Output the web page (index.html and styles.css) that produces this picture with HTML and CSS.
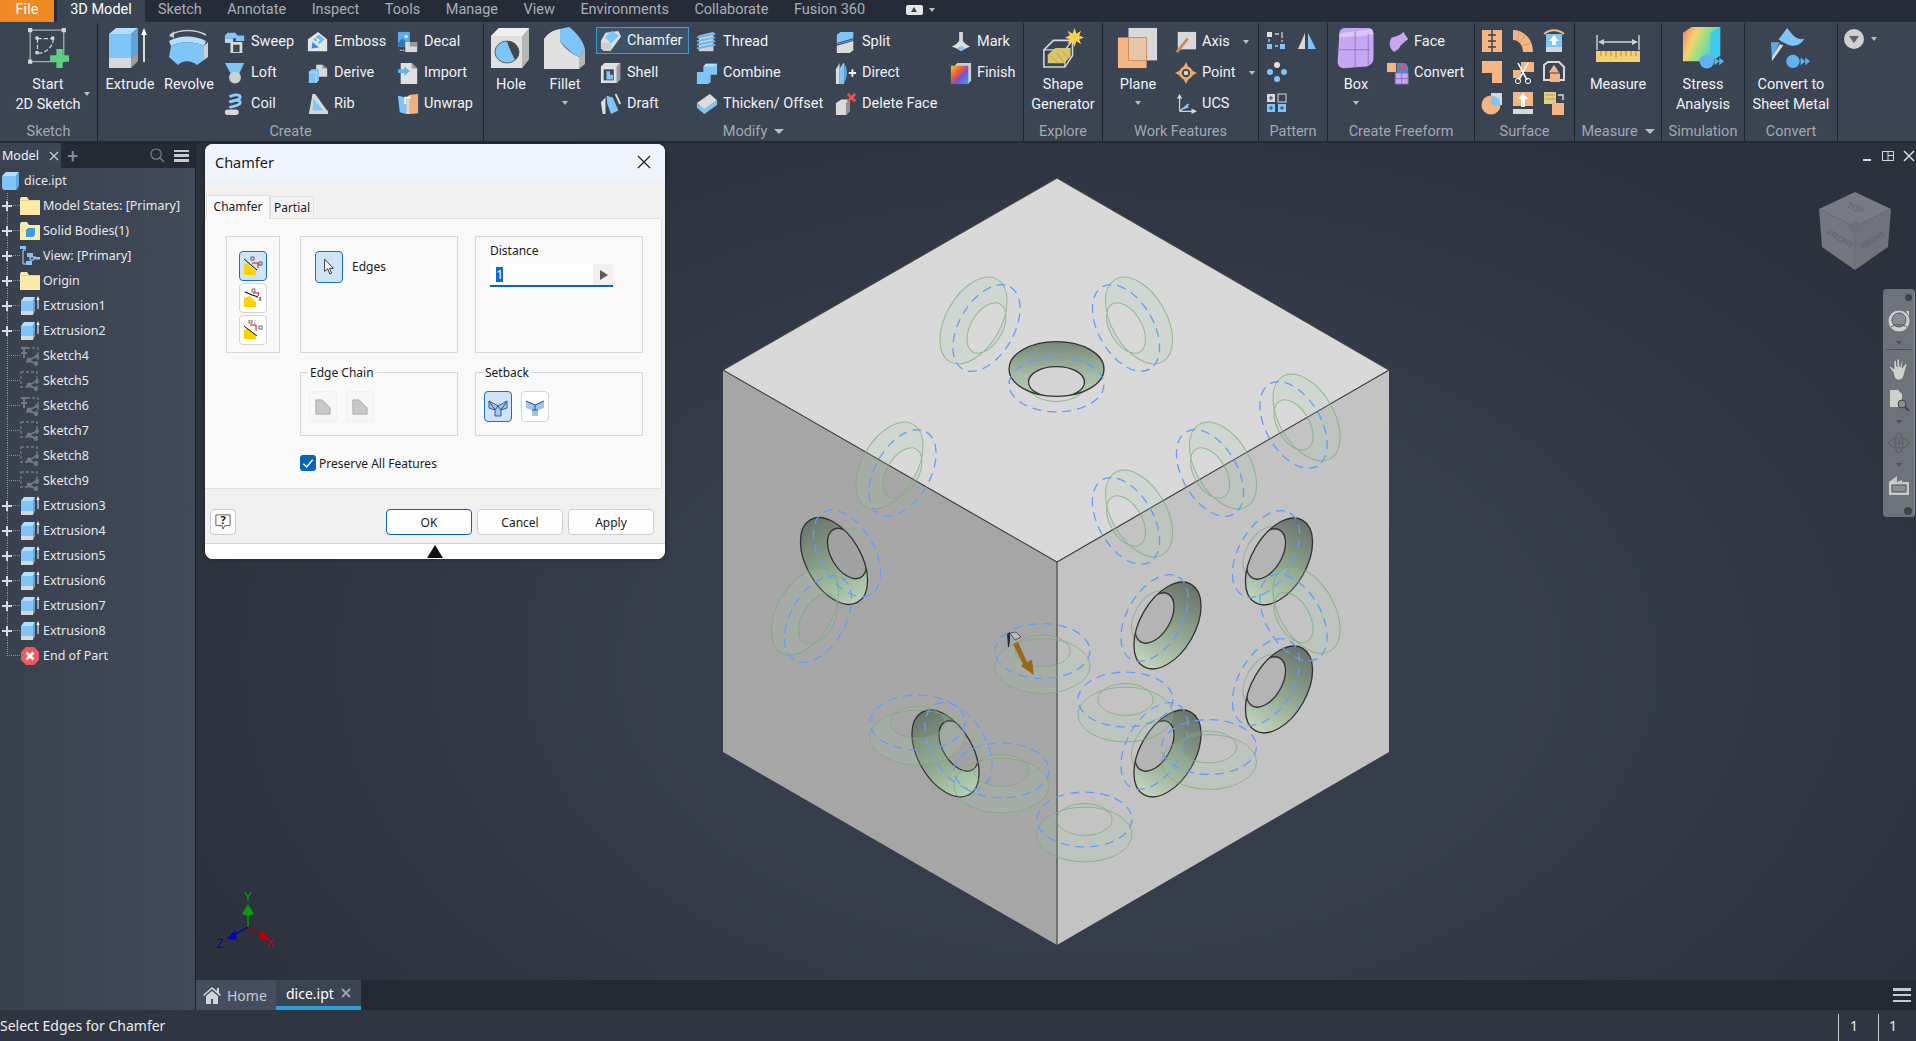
FILE: index.html
```html
<!DOCTYPE html>
<html lang="en">
<head>
<meta charset="utf-8">
<title>dice.ipt - Chamfer</title>
<link rel="stylesheet" href="styles.css">
</head>
<body>
<svg class="defs" width="0" height="0">
<defs>
<linearGradient id="gStress" x1="0" y1="0" x2="1" y2="0.4"><stop offset="0" stop-color="#f77a6a"/><stop offset=".35" stop-color="#f4d36c"/><stop offset=".65" stop-color="#8fe08a"/><stop offset="1" stop-color="#3fc9ee"/></linearGradient>
<linearGradient id="gFinish" x1="0" y1="0" x2="1" y2="1"><stop offset="0" stop-color="#f3c12d"/><stop offset=".4" stop-color="#e8593c"/><stop offset=".6" stop-color="#7c4fd8"/><stop offset="1" stop-color="#2fa8e8"/></linearGradient>
<symbol id="start2d" viewBox="0 0 40 40"><path d="M3 3H35V33H3Z" fill="none" stroke="#a8adb5" stroke-width="1.2"/><g fill="#d8d8d8"><rect x="1" y="1" width="4" height="4"/><rect x="33" y="1" width="4" height="4"/><rect x="1" y="31" width="4" height="4"/></g><path d="M10 11H25M10 11V25M25 11C25 18 19 25 10 25" fill="none" stroke="#cfd2d6" stroke-width="1.2" stroke-dasharray="4 2"/><rect x="8" y="9" width="3" height="3" fill="#ddd"/><rect x="23" y="9" width="3" height="3" fill="#ddd"/><rect x="8" y="23" width="3" height="3" fill="#ddd"/><path d="M27 24h6v6h6v6h-6v6h-6v-6h-6v-6h6z" fill="#5ad17e" transform="translate(1 -3)"/></symbol>
<symbol id="extrude" viewBox="0 0 44 42"><path d="M1 7 8 1H30L23 7Z" fill="#b3e0ff"/><path d="M1 7H23V31H1Z" fill="#7fc5fa"/><path d="M23 7 30 1V25L23 31Z" fill="#5da6dd"/><path d="M1 31H23V41H1Z" fill="#d9d9d9"/><path d="M23 31 30 25V34L23 41Z" fill="#9c9c9c"/><path d="M36 35V4" stroke="#fff" stroke-width="1.6"/><path d="M33 8 36 1 39 8Z" fill="#fff"/></symbol>
<symbol id="revolve" viewBox="0 0 44 42"><path d="M3 8C14 2 28 2 39 8" fill="none" stroke="#c9ccd0" stroke-width="1.6"/><path d="M2 9 7 4V11Z" fill="#c9ccd0"/><path d="M2 14C12 8 28 8 39 14L37 19C27 14 13 14 4 19Z" fill="#b3e0ff"/><path d="M4 19C13 14 27 14 37 19V33L30 38C24 33 16 33 11 38L2 30Z" fill="#7fc5fa"/><path d="M37 19 41 15V30L30 38 37 33Z" fill="#d0d0d0"/></symbol>
<symbol id="sweep" viewBox="0 0 24 24"><path d="M1 5 4 2H12L15 5H22V11H13V8H1Z" fill="#7fc5fa"/><path d="M1 8H10V13H1Z" fill="#a9dcff"/><path d="M7 12H20V24H7Z" fill="#d9d9d9"/><path d="M10 15H17V23H10Z" fill="#43484f"/></symbol>
<symbol id="emboss" viewBox="0 0 24 24"><path d="M1 9 12 1 22 9V22H1Z" fill="#e4e4e4"/><path d="M7 9 13 4 19 9 13 15Z" fill="#6cb8f2"/><path d="M6 12 13 18 5 19Z" fill="#3a90d8"/><path d="M10 8l3 2-3 2 3 2" stroke="#fff" stroke-width="1.2" fill="none"/></symbol>
<symbol id="decal" viewBox="0 0 24 24"><rect x="1" y="1" width="13" height="16" fill="#5aa9e8"/><path d="M1 13 6 8 14 15V17H1Z" fill="#2f78b8"/><circle cx="10" cy="6" r="2" fill="#cfe8fb"/><path d="M9 12H22V23H9Z" fill="#d9d9d9"/><path d="M14 12H22V17H14Z" fill="#9a9a9a"/><path d="M3 21H8" stroke="#ddd" stroke-width="1.2" stroke-dasharray="2 1"/></symbol>
<symbol id="loft" viewBox="0 0 24 24"><path d="M1 1H22L16 14H8Z" fill="#7fc5fa"/><circle cx="12" cy="17" r="6.5" fill="#cfcfcf"/></symbol>
<symbol id="derive" viewBox="0 0 24 24"><path d="M10 3H17L22 7V16H10Z" fill="#d9d9d9"/><path d="M17 3V7H22Z" fill="#8f8f8f"/><path d="M2 11 5 8H13V20L10 23H2Z" fill="#7fc5fa"/><path d="M2 11H10V23" fill="none" stroke="#b3e0ff"/></symbol>
<symbol id="import" viewBox="0 0 24 24"><path d="M4 1H16L22 7V24H4Z" fill="#e0e0e0"/><path d="M16 1V7H22Z" fill="#9a9a9a"/><path d="M1 8H8V5L14 10 8 15V12H1Z" fill="#5fb3f2"/></symbol>
<symbol id="coil" viewBox="0 0 24 24"><g fill="none" stroke="#8fcdfa" stroke-width="3"><path d="M6 4C14 0 20 3 17 6 14 9 8 8 6 10"/><path d="M6 10C14 6 20 9 17 12 14 15 8 14 6 16"/></g><g fill="#d9d9d9"><circle cx="4" cy="21" r="3"/><rect x="4" y="18" width="12" height="6" rx="3"/></g></symbol>
<symbol id="rib" viewBox="0 0 24 24"><path d="M6 1H9L21 18 23 20V23H2Z" fill="#d9d9d9"/><path d="M7 6 18 19H6Z" fill="#7fc5fa"/></symbol>
<symbol id="unwrap" viewBox="0 0 24 24"><path d="M1 3 10 5V23L3 21Z" fill="#7fc5fa"/><path d="M14 2 23 1V22L14 23Z" fill="#f1b07e"/><path d="M10 5 14 2V23L10 23Z" fill="#d9d9d9"/><path d="M9 12V5H15" fill="none" stroke="#fff" stroke-width="2"/></symbol>
<symbol id="hole" viewBox="0 0 44 42"><path d="M2 9 10 1H40V32L33 41H2Z" fill="#e0e0e0"/><path d="M33 9 40 1V32L33 41Z" fill="#b5b5b5"/><path d="M2 9 10 1H40L33 9Z" fill="#f0f0f0"/><ellipse cx="18" cy="25" rx="12" ry="11" fill="#7fc5fa" stroke="#5a5f66"/><path d="M18 14A12 11 0 0 1 26 33C24 28 20 22 18 14Z" fill="#43484f"/></symbol>
<symbol id="fillet" viewBox="0 0 44 42"><path d="M1 12C5 6 10 3 17 2V14C22 22 28 26 36 30V42H1Z" fill="#e0e0e0"/><path d="M17 2 26 0C34 6 40 14 42 22L36 30C28 26 22 20 17 14Z" fill="#7fc5fa"/><path d="M36 30 42 22V37L36 42Z" fill="#b5b5b5"/></symbol>
<symbol id="chamfer" viewBox="0 0 24 24"><path d="M1 12 6 3 20 1 23 7 12 22 1 20Z" fill="#e0e0e0"/><path d="M5 8 13 1 21 6 12 15Z" fill="#7fc5fa"/><path d="M1 13 12 15V23H4L1 20Z" fill="#d0d0d0"/></symbol>
<symbol id="shell" viewBox="0 0 24 24"><path d="M1 5 5 1H22V19L18 23H1Z" fill="#e0e0e0"/><path d="M18 5 22 1V19L18 23Z" fill="#999"/><path d="M4 8H15V20H4Z" fill="#43484f"/><path d="M7 14H14V19H7V14M7 10H11V14H7Z" fill="#7fc5fa"/></symbol>
<symbol id="draft" viewBox="0 0 24 24"><path d="M1 10 6 5V23H3Z" fill="#e0e0e0"/><path d="M7 3 14 5 20 19 12 23 8 12Z" fill="#7fc5fa"/><path d="M17 1 22 12" stroke="#e0e0e0" stroke-width="2"/></symbol>
<symbol id="thread" viewBox="0 0 24 24"><path d="M3 5 19 1V22H3Z" fill="#cfcfcf"/><g fill="none" stroke="#5fb3f2" stroke-width="2"><path d="M1 7 21 3M1 11 21 7M1 15 21 11M1 19 21 15"/></g></symbol>
<symbol id="combine" viewBox="0 0 24 24"><path d="M11 2H23V14H16V22L13 24H1V11H8V5Z" fill="#7fc5fa"/><path d="M8 5 11 2H23L20 5Z" fill="#b3e0ff"/></symbol>
<symbol id="thicken" viewBox="0 0 24 24"><path d="M1 11 15 1 23 8 9 18Z" fill="#dcdcdc"/><path d="M1 11 9 18 23 8V13L9 23 1 16Z" fill="#7fc5fa"/></symbol>
<symbol id="split" viewBox="0 0 24 24"><path d="M2 4 6 1H20V8L2 13Z" fill="#7fc5fa"/><path d="M2 14 20 9V10L2 15Z" fill="#5fa8e0"/><path d="M2 16 20 11V21L16 24H2Z" fill="#dcdcdc"/></symbol>
<symbol id="direct" viewBox="0 0 24 24"><path d="M1 24V8L5 1V24Z" fill="#dcdcdc"/><path d="M5 24V7L9 1H10V24Z" fill="#7fc5fa"/><path d="M15 11h3V8h2v3h3v2h-3v3h-2v-3h-3z" fill="#fff"/><path d="M10 2C14 6 14 18 10 22" fill="#5fa8e0"/></symbol>
<symbol id="delface" viewBox="0 0 24 24"><path d="M1 11 7 7H16V20L12 24H1Z" fill="#d9d9d9"/><path d="M12 11 16 7V20L12 24Z" fill="#8f8f8f"/><path d="M14 1 22 9M22 1 14 9" stroke="#e8524f" stroke-width="3"/></symbol>
<symbol id="mark" viewBox="0 0 24 24"><path d="M10 1H14V11L19 16H5L10 11Z" fill="#d9d9d9"/><path d="M2 17 12 12 22 17 12 21Z" fill="#e0e0e0"/><path d="M7 19 12 16 18 19 12 22Z" fill="#7fc5fa"/></symbol>
<symbol id="finish" viewBox="0 0 24 24"><path d="M5 4 8 1H23V20L20 24Z" fill="#cfcfcf"/><rect x="1" y="4" width="19" height="20" fill="url(#gFinish)"/></symbol>
<symbol id="shape" viewBox="0 0 44 44"><path d="M2 24 12 14H32V30L24 42H2Z" fill="none" stroke="#d9d9d9" stroke-width="1.6"/><path d="M2 24H24V42M24 24 32 14" fill="none" stroke="#d9d9d9" stroke-width="1.4"/><path d="M6 29 14 22H30V31L23 38H6Z" fill="#d9c56a"/><path d="M9 30 17 38M15 27 23 37M22 26 28 33" stroke="#b39f4c"/><path d="M34 1 36 7 41 4 39 9 44 11 39 13 41 18 36 15 34 21 32 15 27 18 29 13 24 11 29 9 27 4 32 7Z" fill="#f5d04a"/></symbol>
<symbol id="plane" viewBox="0 0 44 44"><rect x="12" y="1" width="30" height="34" fill="#d9d9d9"/><rect x="1" y="11" width="30" height="32" fill="#f4b583"/><rect x="12" y="11" width="19" height="24" fill="#e9c5a8" stroke="#c78e5f"/></symbol>
<symbol id="axis" viewBox="0 0 24 24"><rect x="3" y="1" width="20" height="19" fill="#d9d9d9"/><path d="M2 23 14 8" stroke="#c98a60" stroke-width="3"/></symbol>
<symbol id="point" viewBox="0 0 24 24"><circle cx="12" cy="12" r="6" fill="none" stroke="#f0a867" stroke-width="3"/><circle cx="12" cy="12" r="2.5" fill="#d9d9d9"/><path d="M12 0 15 6H9ZM12 24 9 18H15ZM0 12 6 9V15ZM24 12 18 15V9Z" fill="#f0a867"/></symbol>
<symbol id="ucs" viewBox="0 0 24 24"><path d="M5 20V4M5 20H22M5 20 15 12" fill="none" stroke="#d0d0d0" stroke-width="1.4"/><path d="M2 6 5 1 8 6ZM18 17 24 20 18 23Z" fill="#d9d9d9"/><path d="M8 18 13 12 15 16Z" fill="#7fc5fa"/></symbol>
<symbol id="prect" viewBox="0 0 20 20"><g fill="#e0e0e0"><rect x="0" y="1" width="5" height="5"/></g><g fill="#7fc5fa"><rect x="0" y="13" width="5" height="5"/><rect x="13" y="13" width="5" height="5"/></g><path d="M8 3H12M15 1V7M2 8V11M8 15H11M15 9V11" stroke="#d0d0d0" stroke-width="1.3" fill="none"/></symbol>
<symbol id="pmirror" viewBox="0 0 20 20"><path d="M8 2V18H1Z" fill="#d9d9d9"/><path d="M11 2V18H19Z" fill="#7fc5fa"/></symbol>
<symbol id="pcirc" viewBox="0 0 20 20"><circle cx="10" cy="3" r="3" fill="#e0e0e0"/><g fill="#7fc5fa"><circle cx="17" cy="10" r="3"/><circle cx="10" cy="17" r="3"/><circle cx="3" cy="10" r="3"/></g></symbol>
<symbol id="psk" viewBox="0 0 20 20"><rect x="0" y="1" width="8" height="8" fill="#d9d9d9"/><rect x="0" y="11" width="8" height="8" fill="#7fc5fa"/><rect x="11" y="1" width="8" height="8" fill="none" stroke="#d9d9d9"/><rect x="11" y="11" width="8" height="8" fill="#7fc5fa"/><path d="M2 5H6M4 3V7M2 15H6M4 13V17M13 15H17M15 13V17" stroke="#3b4453"/></symbol>
<symbol id="box" viewBox="0 0 44 48"><path d="M3 8C3 3 6 1 10 1H34C39 1 42 3 42 8V36C42 41 38 44 34 45L8 47C4 47 1 44 1 40Z" fill="#c9a6f2"/><path d="M3 8C8 5 30 5 40 2L42 8C34 11 10 11 3 12Z" fill="#dcc4f7"/><path d="M21 5V46M1 26H38M36 8V44" stroke="#8f6fc0" fill="none"/></symbol>
<symbol id="face" viewBox="0 0 24 24"><path d="M5 7C10 6 15 4 18 1L23 9C19 12 15 15 13 19L8 23C3 19 1 14 5 7Z" fill="#c9a6f2"/></symbol>
<symbol id="convff" viewBox="0 0 24 24"><rect x="0" y="1" width="10" height="10" fill="#f4b583"/><path d="M11 1H20C24 5 24 9 22 12H11Z" fill="#3a8fd8"/><path d="M14 3H20V8H14Z" fill="#e8524f"/><rect x="9" y="12" width="14" height="12" fill="#c9a6f2" stroke="#8f6fc0"/><path d="M16 12V24M9 18H23" stroke="#8f6fc0"/></symbol>
<symbol id="s1" viewBox="0 0 22 24"><rect x="1" y="1" width="20" height="22" fill="#f4b583"/><path d="M11 1V23M7 6H15M7 12H15M7 18H15" stroke="#3b4453" stroke-width="1.5"/></symbol>
<symbol id="s2" viewBox="0 0 22 24"><path d="M1 1C12 1 21 10 21 23H11C11 17 7 11 1 11Z" fill="#f4b583"/><path d="M7 2 5 12M13 6 8 14M18 14 10 17" stroke="#d99a68"/></symbol>
<symbol id="s3" viewBox="0 0 22 24"><path d="M1 5C7 0 15 0 21 5" fill="none" stroke="#f4b583" stroke-width="2"/><rect x="3" y="5" width="16" height="13" fill="#7fc5fa"/><path d="M11 6 16 12H13V16H9V12H6Z" fill="#fff"/><rect x="3" y="18" width="16" height="5" fill="#d9d9d9"/></symbol>
<symbol id="s4" viewBox="0 0 22 24"><path d="M1 1H21V23H11V13H1Z" fill="#f4b583"/></symbol>
<symbol id="s5" viewBox="0 0 22 24"><rect x="9" y="2" width="13" height="10" fill="#f4b583"/><rect x="1" y="10" width="8" height="8" fill="#f4b583"/><path d="M6 3 15 20M16 3 7 20" stroke="#fff" stroke-width="1.6"/><circle cx="6" cy="21" r="2.6" fill="none" stroke="#fff"/><circle cx="16" cy="21" r="2.6" fill="none" stroke="#fff"/></symbol>
<symbol id="s6" viewBox="0 0 22 24"><path d="M1 5 5 2H16L21 7V20H1Z" fill="none" stroke="#d9d9d9" stroke-width="2"/><rect x="7" y="13" width="10" height="9" fill="#f4b583"/><path d="M11 4 17 13H5Z" fill="#f4b583" stroke="#3b4453"/></symbol>
<symbol id="s7" viewBox="0 0 22 24"><circle cx="10" cy="14" r="9.5" fill="#f4b583"/><path d="M10 14V2H21V14Z" fill="#d9d9d9"/><path d="M10 14V4.5A9.5 9.5 0 0 1 19.5 14Z" fill="#7fc5fa"/></symbol>
<symbol id="s8" viewBox="0 0 22 24"><rect x="1" y="1" width="20" height="14" fill="#f4b583"/><path d="M11 2 16 8H13V16H9V8H6Z" fill="#fff"/><rect x="1" y="18" width="20" height="5" fill="#d9d9d9"/></symbol>
<symbol id="s9" viewBox="0 0 22 24"><rect x="1" y="1" width="12" height="12" fill="#e3cf7f"/><path d="M2 4H12M2 8H12" stroke="#b39f4c"/><rect x="9" y="12" width="12" height="12" fill="#f4b583"/><path d="M15 4H20V9" fill="none" stroke="#ddd" stroke-width="1.4"/></symbol>
<symbol id="measure" viewBox="0 0 44 30"><path d="M1 2V17M43 2V17" stroke="#d0d0d0" stroke-width="1.4"/><path d="M4 9H40" stroke="#d0d0d0" stroke-width="1.4"/><path d="M2 9 8 6V12ZM42 9 36 6V12Z" fill="#d0d0d0"/><rect x="0" y="18" width="44" height="11" fill="#f5d070"/><path d="M5 18V23M10 18V23M15 18V23M20 18V25M25 18V23M30 18V23M35 18V23M40 18V23" stroke="#a88b3a"/></symbol>
<symbol id="stress" viewBox="0 0 44 44"><path d="M1 6 10 0H40V30L30 36H1Z" fill="url(#gStress)"/><path d="M30 6 40 0V30L30 36Z" fill="#3fc9ee"/><circle cx="26" cy="36" r="7.5" fill="#5fb3f2"/><path d="M34 32 39 36 34 40ZM39 32 44 36 39 40Z" fill="#5fb3f2"/></symbol>
<symbol id="convert" viewBox="0 0 44 44"><path d="M9 13 18 1 22 6C26 12 32 14 36 12 32 20 24 21 18 18 14 16 12 15 9 13Z" fill="#7fc5fa"/><path d="M1 16H10L2 34Z" fill="#5fa8e0"/><path d="M10 18 14 19 2 36V32Z" fill="#d9d9d9"/><circle cx="24" cy="36" r="7" fill="#5fb3f2"/><path d="M32 32 37 36 32 40ZM37 32 42 36 37 40Z" fill="#5fb3f2"/></symbol>
<symbol id="part" viewBox="0 0 20 20"><path d="M1 5 5 1H18L15 5Z" fill="#b3e0ff"/><path d="M1 5H15V19H4C2 19 1 18 1 16Z" fill="#7fc5fa"/><path d="M15 5 18 1V14C18 16 16 19 15 19Z" fill="#5fa8e0"/></symbol>
<symbol id="folder" viewBox="0 0 20 20"><path d="M0 3 1 1H7L9 4H20V19H0Z" fill="#fde9a8"/><path d="M0 4H20V5H0Z" fill="#e7d08a"/></symbol>
<symbol id="solid" viewBox="0 0 20 20"><path d="M0 3 1 1H7L9 4H20V19H0Z" fill="#fde9a8"/><path d="M6 9 8 7H15V14L13 16H6Z" fill="#3f9be0"/></symbol>
<symbol id="viewi" viewBox="0 0 20 20"><path d="M3 4V18H6M3 4H6M10 8V14H14M10 11H16" fill="none" stroke="#cfd2d6" stroke-width="1"/><rect x="0" y="0" width="6" height="3" fill="#7fc5fa"/><rect x="7" y="7" width="6" height="4" fill="#7fc5fa"/><rect x="13" y="11" width="7" height="2.5" fill="#7fc5fa"/><rect x="6" y="15" width="6" height="4" fill="#7fc5fa"/></symbol>
<symbol id="extr" viewBox="0 0 20 20"><path d="M1 5 4 1H15L13 5Z" fill="#b3e0ff"/><path d="M1 5H13V15H1Z" fill="#7fc5fa"/><path d="M13 5 15 1V11L13 15Z" fill="#5fa8e0"/><path d="M1 15H13V19H1Z" fill="#d9d9d9"/><path d="M13 15 15 11V15L13 19Z" fill="#9c9c9c"/><path d="M18 13V2" stroke="#fff"/><path d="M16.5 4 18 0 19.5 4Z" fill="#fff"/></symbol>
<symbol id="sk" viewBox="0 0 20 20"><path d="M1 1H17V16H1Z" fill="none" stroke="#747a84" stroke-width="1.3" stroke-dasharray="3 2"/><path d="M9 14 17 10M9 14 16 18" stroke="#747a84" stroke-width="1.5"/><circle cx="9" cy="14" r="2.4" fill="#747a84"/><circle cx="17" cy="10" r="2" fill="#747a84"/><circle cx="16" cy="18" r="2" fill="#747a84"/></symbol>
<symbol id="skpin" viewBox="0 0 20 20"><path d="M7 2H18V16H6" fill="none" stroke="#747a84" stroke-width="1.3" stroke-dasharray="3 2"/><path d="M1 2H7M4 2V12M1 7H7" stroke="#747a84" stroke-width="2"/><path d="M9 14 17 10M9 14 16 18" stroke="#747a84" stroke-width="1.5"/><circle cx="9" cy="14" r="2.4" fill="#747a84"/><circle cx="17" cy="10" r="2" fill="#747a84"/><circle cx="16" cy="18" r="2" fill="#747a84"/></symbol>
<symbol id="endp" viewBox="0 0 20 20"><path d="M6 1H14L19 6V14L14 19H6L1 14V6Z" fill="#ee5a5f"/><path d="M6.5 6.5 13.5 13.5M13.5 6.5 6.5 13.5" stroke="#fff" stroke-width="2.6"/></symbol>
<symbol id="plus" viewBox="0 0 12 12"><path d="M1 6H11M6 1V11" stroke="#d8dbe0" stroke-width="2"/></symbol>
<symbol id="chA" viewBox="0 0 20 20"><path d="M1 9 4 7 13 15V19H1Z" fill="#fdd400"/><path d="M1 3 14 14" stroke="#111"/><path d="M9 7H15V12" fill="none" stroke="#e00"/><rect x="8" y="1" width="3" height="3" fill="none" stroke="#333" stroke-width=".7"/><rect x="16" y="6" width="3" height="3" fill="none" stroke="#333" stroke-width=".7"/></symbol>
<symbol id="chB" viewBox="0 0 20 20"><path d="M1 10 7 8 13 14V19H1Z" fill="#fdd400"/><path d="M1 7 14 5" stroke="#111" transform="rotate(30 7 7)"/><path d="M10 5H16L14 10" fill="none" stroke="#e00"/><rect x="9" y="1" width="3" height="3" fill="none" stroke="#333" stroke-width=".7"/><path d="M16 13 17 9 18 13" fill="none" stroke="#333" stroke-width=".7"/></symbol>
<symbol id="chC" viewBox="0 0 20 20"><path d="M1 10 5 8 13 15V19H1Z" fill="#fdd400"/><path d="M1 6 14 16" stroke="#111"/><path d="M7 5H13V11" fill="none" stroke="#e00"/><rect x="6" y="0" width="3" height="3" fill="none" stroke="#333" stroke-width=".7"/><path d="M11 0H12.5M11 3H12.5" stroke="#333" stroke-width=".7"/><rect x="16" y="6" width="3" height="3" fill="none" stroke="#333" stroke-width=".7"/></symbol>
<symbol id="cursor" viewBox="0 0 16 20"><path d="M3 1V15L6.5 12 9 18 11 17 8.5 11.5H13Z" fill="#fff" stroke="#222"/></symbol>
<symbol id="edgeA" viewBox="0 0 18 18"><path d="M1 1H8L17 10V17H1Z" fill="#c8c8c8" stroke="#a5a5a5"/></symbol>
<symbol id="setb" viewBox="0 0 20 20"><path d="M1 4 10 9 19 4V11L13 13V19H7V13L1 11Z" fill="#a6c4e8" stroke="#2c5fa8"/><path d="M7 13 10 9 13 13M1 4 7 13M19 4 13 13" fill="none" stroke="#1f4e9c"/></symbol>
<symbol id="setc" viewBox="0 0 20 20"><path d="M1 4 10 8 19 4V11L13 13V19H7V13L1 11Z" fill="#a6c4e8"/><path d="M1 4 10 8 19 4M10 8V13M7 13H13" fill="none" stroke="#1f4e9c"/></symbol>
<symbol id="help" viewBox="0 0 18 18"><path d="M1 1H17V13H11L9 17 8 13H1Z" fill="none" stroke="#555"/></symbol>
<clipPath id="cpOuter"><ellipse rx="47.5" ry="27.4"/></clipPath>
<clipPath id="cpTop"><ellipse cx="1056.5" cy="369" rx="47.5" ry="27.4"/></clipPath>
<g id="ghostUp"><path d="M-47.5 0A47.5 27.4 0 1 0 47.5 0A47.5 27.4 0 1 0-47.5 0ZM-27.6-15A27.6 15.9 0 1 0 27.6-15A27.6 15.9 0 1 0-27.6-15Z" class="gh"/><ellipse cy="-15" rx="47.5" ry="27.4" class="dash"/></g>
<g id="ghostDown"><path d="M-47.5 0A47.5 27.4 0 1 0 47.5 0A47.5 27.4 0 1 0-47.5 0ZM-27.6 15A27.6 15.9 0 1 0 27.6 15A27.6 15.9 0 1 0-27.6 15Z" class="gh"/><ellipse cy="15" rx="47.5" ry="27.4" class="dash"/></g>
<linearGradient id="ringR" x1="1" y1=".5" x2="0" y2=".5"><stop offset="0" stop-color="#6a726b"/><stop offset=".5" stop-color="#8fa48f"/><stop offset="1" stop-color="#c2d5bf"/></linearGradient>
<linearGradient id="ringL" x1="0" y1=".5" x2="1" y2=".5"><stop offset="0" stop-color="#6a756b"/><stop offset=".5" stop-color="#8aa28a"/><stop offset="1" stop-color="#bad1b6"/></linearGradient>
<linearGradient id="ringT" x1=".5" y1="0" x2=".5" y2="1"><stop offset="0" stop-color="#76877a"/><stop offset=".6" stop-color="#a5bba5"/><stop offset="1" stop-color="#b8cab5"/></linearGradient>
<g id="holeR"><ellipse cy="-19" rx="27.6" ry="15.9" class="gh-line"/><ellipse rx="47.5" ry="27.4" fill="url(#ringR)"/><ellipse cy="-15" rx="27.6" ry="15.9" fill="#b4b4b4" stroke="#333" stroke-width="1.3" clip-path="url(#cpOuter)"/><ellipse rx="47.5" ry="27.4" fill="none" stroke="#333" stroke-width="1.3"/><ellipse cy="-15" rx="47.5" ry="27.4" class="dash"/></g>
<g id="holeL"><ellipse cy="-19" rx="27.6" ry="15.9" class="gh-line"/><ellipse rx="47.5" ry="27.4" fill="url(#ringL)"/><ellipse cy="-15" rx="27.6" ry="15.9" fill="#a2a2a2" stroke="#333" stroke-width="1.3" clip-path="url(#cpOuter)"/><ellipse rx="47.5" ry="27.4" fill="none" stroke="#333" stroke-width="1.3"/><ellipse cy="-15" rx="47.5" ry="27.4" class="dash"/></g>
</defs>
</svg>

<div class="app">
<nav class="menubar">
<span class="mtab file">File</span><span class="mtab cur">3D Model</span>
<span class="mi first">Sketch</span><span class="mi">Annotate</span><span class="mi">Inspect</span><span class="mi">Tools</span><span class="mi">Manage</span><span class="mi">View</span><span class="mi">Environments</span><span class="mi">Collaborate</span><span class="mi">Fusion 360</span>
<span class="mcam"><span class="camb"></span><span class="caret"></span></span>
</nav>

<section class="ribbon">
<div class="rg w-sketch"><div class="rb">
<div class="big c96 rel"><svg class="bi"><use href="#start2d"/></svg><span class="bl">Start<br>2D Sketch</span><span class="caret startc"></span></div>
</div><div class="rl">Sketch</div></div>

<div class="rg w-create"><div class="rb lead2">
<div class="big c60"><svg class="bi"><use href="#extrude"/></svg><span class="bl">Extrude</span></div>
<div class="big c58"><svg class="bi"><use href="#revolve"/></svg><span class="bl">Revolve</span></div>
<div class="sc c83"><div class="sm"><svg class="si"><use href="#sweep"/></svg>Sweep</div><div class="sm"><svg class="si"><use href="#loft"/></svg>Loft</div><div class="sm"><svg class="si"><use href="#coil"/></svg>Coil</div></div>
<div class="sc c90"><div class="sm"><svg class="si"><use href="#emboss"/></svg>Emboss</div><div class="sm"><svg class="si"><use href="#derive"/></svg>Derive</div><div class="sm"><svg class="si"><use href="#rib"/></svg>Rib</div></div>
<div class="sc"><div class="sm"><svg class="si"><use href="#decal"/></svg>Decal</div><div class="sm"><svg class="si"><use href="#import"/></svg>Import</div><div class="sm"><svg class="si"><use href="#unwrap"/></svg>Unwrap</div></div>
</div><div class="rl">Create</div></div>

<div class="rg w-modify"><div class="rb">
<div class="big c54"><svg class="bi"><use href="#hole"/></svg><span class="bl">Hole</span></div>
<div class="big c54"><svg class="bi"><use href="#fillet"/></svg><span class="bl">Fillet</span><span class="caret"></span></div>
<div class="sc p8 c96"><div class="sm active"><svg class="si"><use href="#chamfer"/></svg>Chamfer</div><div class="sm"><svg class="si"><use href="#shell"/></svg>Shell</div><div class="sm"><svg class="si"><use href="#draft"/></svg>Draft</div></div>
<div class="sc p8 c139"><div class="sm"><svg class="si"><use href="#thread"/></svg>Thread</div><div class="sm"><svg class="si"><use href="#combine"/></svg>Combine</div><div class="sm"><svg class="si"><use href="#thicken"/></svg>Thicken/ Offset</div></div>
<div class="sc p8 c115"><div class="sm"><svg class="si"><use href="#split"/></svg>Split</div><div class="sm"><svg class="si"><use href="#direct"/></svg>Direct</div><div class="sm"><svg class="si"><use href="#delface"/></svg>Delete Face</div></div>
<div class="sc p8"><div class="sm"><svg class="si"><use href="#mark"/></svg>Mark</div><div class="sm"><svg class="si"><use href="#finish"/></svg>Finish</div></div>
</div><div class="rl">Modify <span class="caret lc"></span></div></div>

<div class="rg w-explore"><div class="rb"><div class="big fill"><svg class="bi"><use href="#shape"/></svg><span class="bl">Shape<br>Generator</span></div></div><div class="rl">Explore</div></div>

<div class="rg w-work"><div class="rb">
<div class="big c70"><svg class="bi"><use href="#plane"/></svg><span class="bl">Plane</span><span class="caret"></span></div>
<div class="sc p2"><div class="sm"><svg class="si"><use href="#axis"/></svg>Axis<span class="caret smc"></span></div><div class="sm"><svg class="si"><use href="#point"/></svg>Point<span class="caret smc"></span></div><div class="sm"><svg class="si"><use href="#ucs"/></svg>UCS</div></div>
</div><div class="rl">Work Features</div></div>

<div class="rg w-pattern"><div class="rb"><div class="igrid pat">
<svg class="pi"><use href="#prect"/></svg><svg class="pi"><use href="#pmirror"/></svg>
<svg class="pi"><use href="#pcirc"/></svg><span></span>
<svg class="pi"><use href="#psk"/></svg><span></span>
</div></div><div class="rl">Pattern</div></div>

<div class="rg w-free"><div class="rb">
<div class="big c56"><svg class="bi"><use href="#box"/></svg><span class="bl">Box</span><span class="caret"></span></div>
<div class="sc p3"><div class="sm"><svg class="si"><use href="#face"/></svg>Face</div><div class="sm"><svg class="si"><use href="#convff"/></svg>Convert</div></div>
</div><div class="rl">Create Freeform</div></div>

<div class="rg w-surface"><div class="rb"><div class="igrid surf">
<svg class="ui"><use href="#s1"/></svg><svg class="ui"><use href="#s2"/></svg><svg class="ui"><use href="#s3"/></svg>
<svg class="ui"><use href="#s4"/></svg><svg class="ui"><use href="#s5"/></svg><svg class="ui"><use href="#s6"/></svg>
<svg class="ui"><use href="#s7"/></svg><svg class="ui"><use href="#s8"/></svg><svg class="ui"><use href="#s9"/></svg>
</div></div><div class="rl">Surface</div></div>

<div class="rg w-measure"><div class="rb"><div class="big fill"><svg class="bi"><use href="#measure"/></svg><span class="bl">Measure</span></div></div><div class="rl">Measure <span class="caret lc"></span></div></div>
<div class="rg w-sim"><div class="rb"><div class="big fill"><svg class="bi"><use href="#stress"/></svg><span class="bl">Stress<br>Analysis</span></div></div><div class="rl">Simulation</div></div>
<div class="rg w-conv"><div class="rb"><div class="big fill"><svg class="bi"><use href="#convert"/></svg><span class="bl">Convert to<br>Sheet Metal</span></div></div><div class="rl">Convert</div></div>
<div class="rext"><span class="extb"><span class="extt"></span></span><span class="caret"></span></div>
</section>
<div class="rstrip"></div>

<main class="work">
<aside class="browser">
<div class="btabs"><span class="btab">Model<svg class="bx" viewBox="0 0 10 10"><path d="M1 1 9 9M9 1 1 9" stroke="#c8ccd2" stroke-width="1.3"/></svg></span><span class="bplus">+</span>
<svg class="bsearch" viewBox="0 0 16 16"><circle cx="6.5" cy="6.5" r="5.5" fill="none" stroke="#7e8590" stroke-width="1.2"/><path d="M10.5 10.5 15 15" stroke="#7e8590" stroke-width="1.4"/></svg>
<span class="burger"><i></i><i></i><i></i></span></div>
<div class="tree">
<div class="row root"><svg class="ti rooti"><use href="#part"/></svg>dice.ipt</div>
<div class="row"><span class="tw"><svg class="pl"><use href="#plus"/></svg></span><svg class="ti"><use href="#folder"/></svg>Model States: [Primary]</div>
<div class="row"><span class="tw"><svg class="pl"><use href="#plus"/></svg></span><svg class="ti"><use href="#solid"/></svg>Solid Bodies(1)</div>
<div class="row"><span class="tw"><svg class="pl"><use href="#plus"/></svg></span><svg class="ti"><use href="#viewi"/></svg>View: [Primary]</div>
<div class="row"><span class="tw"><svg class="pl"><use href="#plus"/></svg></span><svg class="ti"><use href="#folder"/></svg>Origin</div>
<div class="row"><span class="tw"><svg class="pl"><use href="#plus"/></svg></span><svg class="ti"><use href="#extr"/></svg>Extrusion1</div>
<div class="row"><span class="tw"><svg class="pl"><use href="#plus"/></svg></span><svg class="ti"><use href="#extr"/></svg>Extrusion2</div>
<div class="row"><span class="tw"></span><svg class="ti"><use href="#skpin"/></svg>Sketch4</div>
<div class="row"><span class="tw"></span><svg class="ti"><use href="#sk"/></svg>Sketch5</div>
<div class="row"><span class="tw"></span><svg class="ti"><use href="#skpin"/></svg>Sketch6</div>
<div class="row"><span class="tw"></span><svg class="ti"><use href="#sk"/></svg>Sketch7</div>
<div class="row"><span class="tw"></span><svg class="ti"><use href="#sk"/></svg>Sketch8</div>
<div class="row"><span class="tw"></span><svg class="ti"><use href="#sk"/></svg>Sketch9</div>
<div class="row"><span class="tw"><svg class="pl"><use href="#plus"/></svg></span><svg class="ti"><use href="#extr"/></svg>Extrusion3</div>
<div class="row"><span class="tw"><svg class="pl"><use href="#plus"/></svg></span><svg class="ti"><use href="#extr"/></svg>Extrusion4</div>
<div class="row"><span class="tw"><svg class="pl"><use href="#plus"/></svg></span><svg class="ti"><use href="#extr"/></svg>Extrusion5</div>
<div class="row"><span class="tw"><svg class="pl"><use href="#plus"/></svg></span><svg class="ti"><use href="#extr"/></svg>Extrusion6</div>
<div class="row"><span class="tw"><svg class="pl"><use href="#plus"/></svg></span><svg class="ti"><use href="#extr"/></svg>Extrusion7</div>
<div class="row"><span class="tw"><svg class="pl"><use href="#plus"/></svg></span><svg class="ti"><use href="#extr"/></svg>Extrusion8</div>
<div class="row last"><span class="tw"></span><svg class="ti"><use href="#endp"/></svg>End of Part</div>
</div>
</aside>

<div class="vcol">
<div class="viewport">
<svg class="scene" viewBox="196 143 1720 837" width="1720" height="837">
<path d="M1057 178 1389 370 1057 562 723 370Z" fill="#d9d9d9"/>
<path d="M723 370 1057 562V945L723 752Z" fill="#a6a6a6"/>
<path d="M1057 562 1389 370V752L1057 945Z" fill="#c3c3c3"/>
<path d="M1057 178 1389 370 1057 562 723 370ZM1057 562V945" fill="none" stroke="#444" stroke-width="1.2"/>

<ellipse cx="1056.5" cy="386" rx="28" ry="15.4" class="gh-line"/>
<ellipse cx="1056.5" cy="369" rx="47.5" ry="27.4" fill="url(#ringT)"/>
<ellipse cx="1056.5" cy="382" rx="28" ry="15.4" fill="#d5d5d5" stroke="#333" stroke-width="1.3" clip-path="url(#cpTop)"/>
<ellipse cx="1056.5" cy="369" rx="47.5" ry="27.4" fill="none" stroke="#333" stroke-width="1.3"/>
<ellipse cx="1056.5" cy="384.5" rx="47.5" ry="27.4" class="dash"/>

<use href="#holeL" transform="translate(834 561) rotate(60)"/>
<use href="#holeL" transform="translate(945.5 753.5) rotate(60)"/>
<use href="#holeR" transform="translate(1167.5 625.5) rotate(-60)"/>
<use href="#holeR" transform="translate(1279 561.5) rotate(-60)"/>
<use href="#holeR" transform="translate(1279 689.5) rotate(-60)"/>
<use href="#holeR" transform="translate(1167.5 753.5) rotate(-60)"/>

<use href="#ghostDown" transform="translate(973.5 320.5) rotate(-60)"/>
<use href="#ghostDown" transform="translate(889.5 465.5) rotate(-60)"/>
<use href="#ghostDown" transform="translate(805 611.5) rotate(-60)"/>
<use href="#ghostDown" transform="translate(1139 320.5) rotate(60)"/>
<use href="#ghostDown" transform="translate(1139 513.5) rotate(60)"/>
<use href="#ghostDown" transform="translate(1223 465.5) rotate(60)"/>
<use href="#ghostDown" transform="translate(1306.5 417.5) rotate(60)"/>
<use href="#ghostDown" transform="translate(1306.5 610) rotate(60)"/>
<use href="#ghostUp" transform="translate(1042.5 666)"/>
<use href="#ghostUp" transform="translate(1125.5 714.5)"/>
<use href="#ghostUp" transform="translate(917.5 737.5)"/>
<use href="#ghostUp" transform="translate(1001.5 785.5)"/>
<use href="#ghostUp" transform="translate(1209 762)"/>
<use href="#ghostUp" transform="translate(1084.5 834.5)"/>

<path d="M1013 644 1018 642 1027 662 1032 660 1034 675 1021 666 1023 664Z" fill="#9a681c"/>
<path d="M1007 634 1010 632 1010 640 1009 647 1008 647Z" fill="#2a2a2a"/><path d="M1010 633 1016 632 1021 637 1015 640Z" fill="#bbb" stroke="#333" stroke-width=".7"/>

<g class="triad">
<path d="M248 927V910" stroke="#00a000" stroke-width="1.4"/><path d="M248 904 254 914 248 916 242 914Z" fill="#0b9a0b"/><text x="248" y="901" class="ty">Y</text>
<path d="M248 927 262 935" stroke="#a00000" stroke-width="1.4"/><path d="M269 939 259 940 262 930Z" fill="#c00000"/><text x="270" y="947" class="tx">X</text>
<path d="M248 927 234 935" stroke="#0000a0" stroke-width="1.4"/><path d="M227 939 237 940 235 930Z" fill="#0000c0"/><text x="220" y="948" class="tz">Z</text>
</g>

<g class="vcube">
<path d="M1855 192 1891 209 1855 227 1819 209Z" fill="#787b81"/>
<path d="M1819 209 1855 227V270L1822 247Z" fill="#74777d"/>
<path d="M1855 227 1891 209 1888 247 1855 270Z" fill="#707379"/>
<path d="M1855 227 1891 209M1855 227 1819 209M1855 227V270" stroke="#696c72" stroke-width=".7" fill="none"/>
<path d="M1855 221 1862 226 1855 236 1848 226Z" fill="#6d7076"/>
<text transform="translate(1846 207) rotate(24)" class="cube-t cube-top">TOP</text>
<text transform="translate(1826 234) rotate(30)" class="cube-t">FRONT</text>
<text transform="translate(1863 249) rotate(-30)" class="cube-t">RIGHT</text>
</g>
</svg>

<div class="winctl">
<svg class="wc" viewBox="0 0 12 12"><path d="M2 10H10" stroke="#d5dae2" stroke-width="2"/></svg>
<svg class="wc" viewBox="0 0 12 12"><path d="M.5 1.5H11.5V10.5H.5ZM6 1.5V10.5M6 5.5H11.5" fill="none" stroke="#d5dae2"/></svg>
<svg class="wc" viewBox="0 0 12 12"><path d="M1 1 11 11M11 1 1 11" stroke="#d5dae2" stroke-width="1.5"/></svg>
</div>

<div class="navbar">
<span class="nx"></span>
<svg class="ni nw" viewBox="0 0 22 22"><circle cx="11" cy="11" r="10.5" fill="#cfcfcf"/><path d="M18 1H21V6Z" fill="#cfcfcf"/><circle cx="11" cy="10" r="7" fill="#8a8d93" stroke="#55585e"/><path d="M3 17C7 14 15 14 19 17" stroke="#55585e" fill="none"/></svg>
<span class="nc nc1"></span><span class="nl"></span>
<svg class="ni" viewBox="0 0 22 22"><path d="M5 14 1 9 2 8 6 11V3L8 2 9 9V1H11L12 9 14 2 15 3 14 10 18 5 19 6 16 17C15 21 13 22 10 22 7 22 6 18 5 14Z" fill="#d0d0d0" stroke="#55585e" stroke-width=".6"/></svg>
<svg class="ni" viewBox="0 0 22 22"><path d="M2 1H10L14 5V18H2Z" fill="#d0d0d0"/><circle cx="14" cy="15" r="4" fill="#8a8d93" stroke="#3f4247"/><path d="M17 18 21 22" stroke="#3f4247" stroke-width="2"/></svg>
<span class="nc"></span>
<svg class="ni" viewBox="0 0 22 22"><ellipse cx="11" cy="11" rx="10" ry="5" fill="none" stroke="#5a5d63"/><ellipse cx="11" cy="11" rx="4" ry="10" fill="none" stroke="#5a5d63"/><path d="M8 11H14M11 8V14" stroke="#5a5d63"/></svg>
<span class="nc"></span>
<svg class="ni" viewBox="0 0 22 22"><path d="M1 7 9 1V7L14 5V7H21V20H1Z" fill="#c9c9c9"/><rect x="4" y="10" width="14" height="7" fill="#8a8d93" stroke="#4d5056"/></svg>
<span class="nd"></span>
</div>
</div>

<div class="dtabs">
<span class="dt home"><svg class="hi" viewBox="0 0 20 18"><path d="M1 9 10 1 15 5V2H17V7L19 9 18 10 10 3 2 10Z" fill="#d0d3d8"/><path d="M4 10 10 5 16 10V18H11V13H9V18H4Z" fill="#d0d3d8"/></svg>Home</span>
<span class="dt dice">dice.ipt<svg class="dx" viewBox="0 0 10 10"><path d="M1 1 9 9M9 1 1 9" stroke="#9aa0aa" stroke-width="2"/></svg></span>
<span class="spacer"></span>
<span class="burger db"><i></i><i></i><i></i></span>
</div>
</div>
</main>

<footer class="status"><span class="st">Select Edges for Chamfer</span><span class="sc1">1</span><span class="sc1">1</span></footer>

<div class="dialog">
<div class="dtitle"><span>Chamfer</span><svg class="dclose" viewBox="0 0 14 14"><path d="M1 1 13 13M13 1 1 13" stroke="#222" stroke-width="1.2"/></svg></div>
<div class="dbody">
<div class="dlgtabs"><span class="dlt on">Chamfer</span><span class="dlt">Partial</span></div>
<div class="panel">
<div class="box bicons">
<span class="ib act tall"><svg class="cic"><use href="#chA"/></svg></span>
<span class="ib tall"><svg class="cic"><use href="#chB"/></svg></span>
<span class="ib tall"><svg class="cic"><use href="#chC"/></svg></span>
</div>
<div class="box bedges"><span class="ib act edgeb"><svg class="curs"><use href="#cursor"/></svg></span><span>Edges</span></div>
<div class="box bdist"><div class="dlabel">Distance</div>
<div class="input"><span class="val"><span class="sel">1</span></span><span class="arrow"><span class="tri"></span></span></div></div>
<div class="box blow spanmid"><span class="leg">Edge Chain</span><span class="ib dis"><svg class="eic"><use href="#edgeA"/></svg></span><span class="ib dis"><svg class="eic"><use href="#edgeA"/></svg></span></div>
<div class="box blow"><span class="leg">Setback</span><span class="ib act"><svg class="cic"><use href="#setb"/></svg></span><span class="ib"><svg class="cic"><use href="#setc"/></svg></span></div>
<label class="chk"><span class="cb"><svg viewBox="0 0 12 12"><path d="M2.5 6.5 5 9 9.5 3.5" fill="none" stroke="#fff" stroke-width="1.1"/></svg></span>Preserve All Features</label>
</div>
<div class="dfoot">
<span class="hbtn"><svg viewBox="0 0 18 18"><use href="#help"/></svg><b>?</b></span>
<span class="spacer"></span>
<span class="btn ok">OK</span><span class="btn">Cancel</span><span class="btn">Apply</span>
</div>
</div>
<div class="dstrip"><span class="up"></span></div>
</div>
</div>
</body>
</html>
```

FILE: styles.css
```css
* { box-sizing: border-box; }
html, body { margin: 0; padding: 0; width: 1916px; height: 1041px; overflow: hidden; background: #2b313d; }
body { font-family: "Roboto", "Liberation Sans", sans-serif; }
.defs { position: absolute; }
.dash { fill: none; stroke: #629bff; stroke-width: 1.3; stroke-dasharray: 9 6; }
.gh { fill: #a8d0a8; fill-opacity: .17; fill-rule: evenodd; stroke: #78a87c; stroke-opacity: .7; stroke-width: 1; }
.gh-line { fill: none; stroke: #8fb48f; stroke-width: 1; }
.app { position: relative; width: 1916px; height: 1041px; display: flex; flex-direction: column; }

.menubar { height: 22px; background: #262c37; display: flex; align-items: stretch; font-size: 14.5px; color: #a9aeb8; line-height: 20px; }
.mtab { display: flex; align-items: center; justify-content: center; padding-bottom: 2px; }
.file { width: 54px; background: #f08a24; color: #fff; }
.cur { width: 88px; margin-left: 3px; background: #3b4453; color: #fff; }
.mi { margin-left: 25.5px; display: flex; align-items: center; padding-bottom: 2px; }
.mi.first { margin-left: 13px; }
.mcam { margin-left: 41px; display: flex; align-items: center; gap: 6px; padding-bottom: 2px; }
.camb { width: 17px; height: 10px; border-radius: 2px; background: #e6e6e6; position: relative; }
.camb::after { content: ""; position: absolute; left: 5px; top: 2px; border: 3.5px solid transparent; border-top: 0; border-bottom: 5px solid #3b4453; }
.caret { display: block; width: 0; height: 0; border-left: 3.5px solid transparent; border-right: 3.5px solid transparent; border-top: 4px solid #b9bdc4; }

.ribbon { height: 119px; background: #3b4453; display: flex; color: #f0f2f5; font-size: 14.5px; }
.rstrip { height: 2px; background: #242a34; }
.rg { display: flex; flex-direction: column; border-right: 1px solid #20262f; margin-top: 1px; }
.rb { flex: 1; display: flex; min-height: 0; }
.rl { height: 21px; padding-top: 2px; line-height: 19px; text-align: center; color: #a3a9b3; font-size: 14.5px; white-space: nowrap; display: flex; justify-content: center; align-items: center; gap: 7px; }
.caret.lc { border-left-width: 5px; border-right-width: 5px; border-top-width: 5px; }
.w-sketch { width: 98px; } .w-create { width: 386px; } .w-modify { width: 540px; } .w-explore { width: 79px; }
.w-work { width: 156px; } .w-pattern { width: 69px; } .w-free { width: 147px; } .w-surface { width: 100px; }
.w-measure { width: 87px; } .w-sim { width: 83px; } .w-conv { width: 93px; }
.lead2 { padding-left: 2px; }
.big { display: flex; flex-direction: column; align-items: center; padding-top: 4px; flex: none; }
.rel { position: relative; }
.fill { flex: 1; }
.bi { width: 44px; height: 42px; display: block; }
.bl { text-align: center; line-height: 20px; margin-top: 6px; white-space: nowrap; }
.big .caret { margin-top: 6px; }
.big .startc { position: absolute; right: 6px; top: 69px; margin: 0; }
.c96 { width: 96px; } .c60 { width: 60px; } .c58 { width: 58px; } .c54 { width: 54px; } .c70 { width: 70px; } .c56 { width: 56px; }
.c83 { width: 83px; } .c90 { width: 90px; } .c139 { width: 139px; } .c115 { width: 115px; }
.sc { display: flex; flex-direction: column; padding-top: 3px; padding-left: 6px; flex: none; }
.sc.p8 { padding-left: 8px; } .sc.p2 { padding-left: 2px; } .sc.p3 { padding-left: 3px; }
.sc.c96 { width: 96px; }
.sm { height: 31px; display: flex; align-items: center; gap: 5px; white-space: nowrap; flex: none; }
.si { width: 22px; height: 24px; flex: none; }
.sm.active { margin: 1px 0 3px -4px; height: 27px; width: 93px; padding-left: 3px; border: 1px solid #3a9bd0; background: #3e5265; }
.caret.smc { margin-left: 8px; }
.igrid { display: grid; padding-top: 2px; }
.pat { grid-template-columns: 30px 30px; grid-auto-rows: 31px; padding-left: 3px; justify-items: center; align-items: center; }
.pi { width: 20px; height: 20px; }
.surf { grid-template-columns: 31px 31px 31px; grid-auto-rows: 31px; padding-left: 1px; justify-items: center; align-items: center; }
.ui { width: 22px; height: 24px; }
.rext { padding: 7px 0 0 6px; display: flex; gap: 7px; }
.extb { width: 20px; height: 20px; border-radius: 50%; background: #d0d0d0; display: flex; align-items: center; justify-content: center; }
.extt { border-left: 5px solid transparent; border-right: 5px solid transparent; border-top: 7px solid #5d6168; }
.rext .caret { margin-top: 8px; }

.work { flex: 1; display: flex; min-height: 0; }
.browser { width: 196px; border-right: 1px solid #1c2129; background: linear-gradient(to right, #39414f, #414a59); color: #e6e8ec; flex: none; }
.btabs { height: 25px; background: #252b35; display: flex; align-items: center; position: relative; font-size: 12.5px; font-family: "Noto Sans", sans-serif; }
.btab { width: 61px; height: 100%; background: #3b4453; display: flex; align-items: center; padding-left: 2px; color: #f0f2f5; }
.bx { width: 10px; height: 10px; margin-left: 10px; }
.bplus { margin-left: 6px; color: #8b919c; font-size: 20px; line-height: 20px; font-family: "Roboto", sans-serif; }
.bsearch { width: 15px; height: 15px; margin-left: auto; }
.burger { display: flex; flex-direction: column; justify-content: space-between; width: 15px; height: 12px; margin: 0 6px 0 9px; }
.burger i { display: block; height: 2.5px; background: #c5c9d0; }
.tree { font-family: "Noto Sans", "DejaVu Sans", sans-serif; font-size: 12.5px; }
.row { height: 25px; display: flex; align-items: center; white-space: nowrap; }
.root { padding-left: 1px; }
.rooti { width: 18px; height: 18px; margin-right: 4px; }
.tw { width: 20px; height: 25px; flex: none; position: relative; background: repeating-linear-gradient(to bottom, #8a909a 0 1px, transparent 1px 2px) 7px 0 / 1px 100% no-repeat, repeating-linear-gradient(to right, #8a909a 0 1px, transparent 1px 2px) 7px 12px / 13px 1px no-repeat; display: block; }
.last .tw { background: repeating-linear-gradient(to bottom, #8a909a 0 1px, transparent 1px 2px) 7px 0 / 1px 13px no-repeat, repeating-linear-gradient(to right, #8a909a 0 1px, transparent 1px 2px) 7px 12px / 13px 1px no-repeat; }
.pl { position: absolute; left: 1px; top: 7px; width: 12px; height: 12px; }
.ti { width: 20px; height: 20px; margin-right: 3px; flex: none; }

.vcol { flex: 1; display: flex; flex-direction: column; min-width: 0; }
.viewport { flex: 1; position: relative; overflow: hidden; background: radial-gradient(ellipse 1000px 620px at 52% 62%, #3a414e 0%, #363d4a 45%, #2b313d 100%); }
.scene { display: block; }
.triad text { font-family: "Liberation Sans", sans-serif; font-size: 12px; text-anchor: middle; }
.ty { fill: #0b9a0b; } .tx { fill: #c00000; text-anchor: start; } .tz { fill: #0000c0; }
.cube-t { font-family: "Liberation Sans", sans-serif; font-size: 8.5px; fill: #5d6066; }
.cube-top { font-style: italic; }
.winctl { position: absolute; right: 1px; top: 7px; display: flex; gap: 9px; align-items: center; }
.wc { width: 12px; height: 12px; }
.navbar { position: absolute; right: 1px; top: 146px; width: 32px; height: 228px; background: #6e7279; border-radius: 4px; border-right: 1px solid #8a8e94; display: flex; flex-direction: column; align-items: center; }
.nx { width: 7px; height: 7px; border-radius: 50%; background: #3f4247; margin: 5px 2px 0 auto; flex: none; }
.ni { width: 24px; height: 22px; display: block; flex: none; }
.nw { margin-top: 9px; }
.nc { width: 0; height: 0; border-left: 3.5px solid transparent; border-right: 3.5px solid transparent; border-top: 4px solid #4f5258; margin: 9px 0 8px; flex: none; }
.nc.nc1 { margin: 9px 0 4px; }
.nl { width: 26px; height: 1px; background: #4f5258; margin: 0 0 8px; flex: none; }
.nd { width: 8px; height: 8px; border-radius: 50%; background: #3f4247; margin: 10px 2px 0 auto; flex: none; }
.navbar .ni + .ni { margin-top: 9px; }

.dtabs { height: 30px; background: #242a33; display: flex; align-items: stretch; color: #fff; font-size: 14px; font-family: "Noto Sans", sans-serif; flex: none; }
.dt { display: flex; align-items: center; }
.home { width: 80px; background: #454e5e; color: #c3c7ce; padding-left: 6px; gap: 5px; }
.hi { width: 20px; height: 18px; }
.dice { width: 85px; background: #3b4453; border-bottom: 4px solid #2d9fd8; padding-left: 10px; gap: 7px; }
.dx { width: 10px; height: 10px; }
.spacer { flex: 1; }
.burger.db { align-self: center; width: 18px; height: 14px; margin: 0 5px 0 0; }

.status { height: 31px; background: #2f3541; display: flex; align-items: center; color: #eceef1; font-family: "Noto Sans", sans-serif; font-size: 14px; flex: none; }
.st { flex: 1; }
.sc1 { width: 40px; height: 27px; margin-top: 4px; border-left: 1px solid #c9ccd1; padding-left: 11px; line-height: 23px; }
.sc1:last-child { width: 38px; padding-left: 10px; }

.dialog { position: absolute; left: 205px; top: 144px; width: 460px; height: 415px; border-radius: 8px; background: #f0f0f0; overflow: hidden; display: flex; flex-direction: column; font-family: "Noto Sans", "Open Sans", sans-serif; font-size: 12px; color: #1b1b1b; box-shadow: 0 0 4px rgba(0,0,0,.4); }
.dtitle { height: 37px; flex: none; background: #f0f4fc; display: flex; align-items: center; justify-content: space-between; padding: 0 14px 2px 10px; font-size: 14.5px; }
.dclose { width: 14px; height: 14px; }
.dbody { flex: 1; display: flex; flex-direction: column; min-height: 0; }
.dlgtabs { height: 37px; padding: 13px 0 0 1px; display: flex; align-items: flex-end; }
.dlt { height: 22px; width: 44px; border: 1px solid #e1e1e1; border-bottom: 0; background: #f2f2f2; display: flex; align-items: center; justify-content: center; }
.dlt.on { height: 24px; width: 64px; background: #f9f9f9; border-right-color: #e1e1e1; padding-bottom: 3px; margin-bottom: -1px; position: relative; z-index: 1; border-bottom: 0; }
.panel { width: 457px; height: 271px; background: #f9f9f9; border: 1px solid #e0e0e0; border-left: 0; padding: 17px 0 0 21px; display: grid; grid-template-columns: 57px 158px 168px; grid-template-rows: 117px 64px auto; column-gap: 17px; row-gap: 19px; }
.box { border: 1px solid #d9d9d9; position: relative; }
.bicons { width: 54px; padding: 14px 0 0 12px; display: flex; flex-direction: column; gap: 2px; }
.ib { width: 28px; height: 31px; border: 1px solid #d4d4d4; border-radius: 4px; background: #fff; display: flex; align-items: center; justify-content: center; flex: none; }
.ib.act { background: #cfe4f7; border-color: #1a6fc0; }
.ib.dis { background: #f7f7f7; border-color: #efefef; }
.ib.tall { height: 30px; }
.cic { width: 20px; height: 20px; }
.bedges { padding: 14px 0 0 14px; display: flex; gap: 9px; align-items: flex-start; line-height: 32px; }
.edgeb { height: 32px; }
.curs { width: 14px; height: 18px; }
.bdist { padding: 4px 0 0 14px; }
.dlabel { height: 23px; line-height: 20px; }
.input { width: 123px; height: 23px; display: flex; background: #fff; border-bottom: 2px solid #0a63bd; }
.val { flex: 1; padding: 3px 0 0 6px; line-height: 15px; }
.sel { display: inline-block; width: 7px; background: #0a6cd6; color: #fff; text-align: center; font-size: 13px; }
.arrow { width: 20px; background: #f0f0f0; display: flex; align-items: center; justify-content: center; }
.tri { border-top: 5px solid transparent; border-bottom: 5px solid transparent; border-left: 8px solid #5b5b5b; margin-left: 2px; }
.blow { padding: 18px 0 0 8px; display: flex; gap: 9px; }
.spanmid { grid-column: 2; }
.leg { position: absolute; left: 7px; top: -9px; background: #f9f9f9; padding: 0 2px; line-height: 18px; }
.eic { width: 16px; height: 16px; }
.chk { grid-column: 2 / span 2; display: flex; align-items: center; gap: 3px; height: 16px; }
.cb { width: 16px; height: 16px; background: #0a63bd; border-radius: 3px; display: block; }
.cb svg { display: block; width: 16px; height: 16px; }
.dfoot { flex: 1; display: flex; align-items: flex-start; gap: 5px; padding: 20px 11px 0 5px; }
.hbtn { position: relative; width: 26px; height: 26px; background: #fbfbfb; border: 1px solid #ccc; border-radius: 4px; display: flex; align-items: center; justify-content: center; }
.hbtn svg { width: 16px; height: 16px; }
.hbtn b { position: absolute; left: 0; right: 0; top: 3px; text-align: center; font-size: 11px; line-height: 13px; }
.btn { width: 86px; height: 26px; background: #fdfdfd; border: 1px solid #d0d0d0; border-radius: 4px; display: flex; align-items: center; justify-content: center; }
.btn.ok { border-color: #0a63bd; }
.dstrip { height: 16px; flex: none; background: #fff; border-top: 1px solid #d0d0d0; display: flex; justify-content: center; align-items: flex-end; padding-bottom: 1px; }
.up { border-left: 8px solid transparent; border-right: 8px solid transparent; border-bottom: 13px solid #111; }
```
